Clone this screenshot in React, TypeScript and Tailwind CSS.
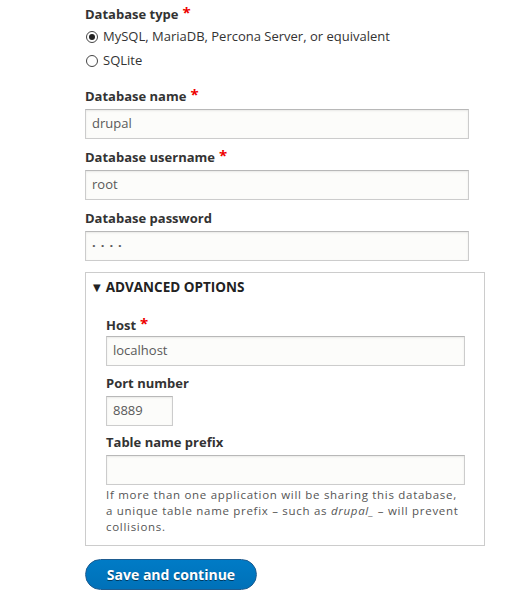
import React from 'react';

const font = { fontFamily: '"Open Sans", "DejaVu Sans", sans-serif' };

const Req = () => <span className="ml-1 text-[#e00] text-[15px] leading-none relative -top-[3px]">*</span>;

function Label({ text, required }: { text: string; required?: boolean }) {
  return (
    <div className="h-[18px] flex items-center text-[13px] font-bold text-[#333]">
      {text}
      {required && <Req />}
    </div>
  );
}

function Input({ value, className = 'w-[384px]', dots }: { value: string; className?: string; dots?: boolean }) {
  return (
    <div
      className={`${className} h-[30px] mt-[3px] px-[6px] flex items-center bg-[#fcfcfa] border border-[#ccc] border-t-[#b8b8b8] text-[13px] text-[#595959] shadow-[inset_0_1px_2px_rgba(0,0,0,0.08)] ${dots ? 'tracking-[5px] font-bold' : ''}`}
    >
      {value}
    </div>
  );
}

function Radio({ checked, label }: { checked?: boolean; label: string }) {
  return (
    <div className="h-[24px] flex items-center text-[13px] text-[#333]">
      <span className="w-[12px] h-[12px] mr-[5px] ml-[1px] rounded-full border border-[#444] flex items-center justify-center bg-white">
        {checked && <span className="w-[6px] h-[6px] rounded-full bg-[#222]" />}
      </span>
      {label}
    </div>
  );
}

export default function App() {
  return (
    <div className="w-[512px] h-[610px] bg-white pl-[85px] pt-[6px]" style={font}>
      <Label text="Database type" required />
      <div className="mt-[1px]">
        <Radio checked label="MySQL, MariaDB, Percona Server, or equivalent" />
        <Radio label="SQLite" />
      </div>

      <div className="mt-[15px]">
        <Label text="Database name" required />
        <Input value="drupal" />
      </div>
      <div className="mt-[10px]">
        <Label text="Database username" required />
        <Input value="root" />
      </div>
      <div className="mt-[10px]">
        <Label text="Database password" />
        <Input value="····" dots />
      </div>

      <div className="mt-[11px] w-[400px] h-[274px] border border-[#ccc] pt-[5px] pl-[7px]">
        <div className="h-[18px] flex items-center text-[13.5px] font-bold text-[#222] uppercase">
          <span className="text-[10px] mr-[5px]">▼</span>
          Advanced options
        </div>
        <div className="pl-[13px] mt-[21px]">
          <Label text="Host" required />
          <div className="[&>div]:w-[359px] [&>div]:mt-[1px]">
            <Input value="localhost" />
          </div>
          <div className="mt-[9px]">
            <Label text="Port number" />
            <Input value="8889" className="w-[67px]" />
          </div>
          <div className="mt-[8px]">
            <Label text="Table name prefix" />
            <Input value="" className="w-[359px]" />
          </div>
          <p className="mt-[2px] w-[360px] text-[11.5px] leading-[16px] text-[#555] tracking-[0.7px]">
            If more than one application will be sharing this database, a unique table name prefix – such as <em>drupal_</em> – will prevent collisions.
          </p>
        </div>
      </div>

      <button className="mt-[13px] w-[172px] h-[31px] rounded-full bg-gradient-to-b from-[#007bc6] to-[#0071b8] border border-[#1e5c90] text-white text-[14px] font-bold [text-shadow:0_1px_0_rgba(0,0,0,0.5)]">
        Save and continue
      </button>
    </div>
  );
}
